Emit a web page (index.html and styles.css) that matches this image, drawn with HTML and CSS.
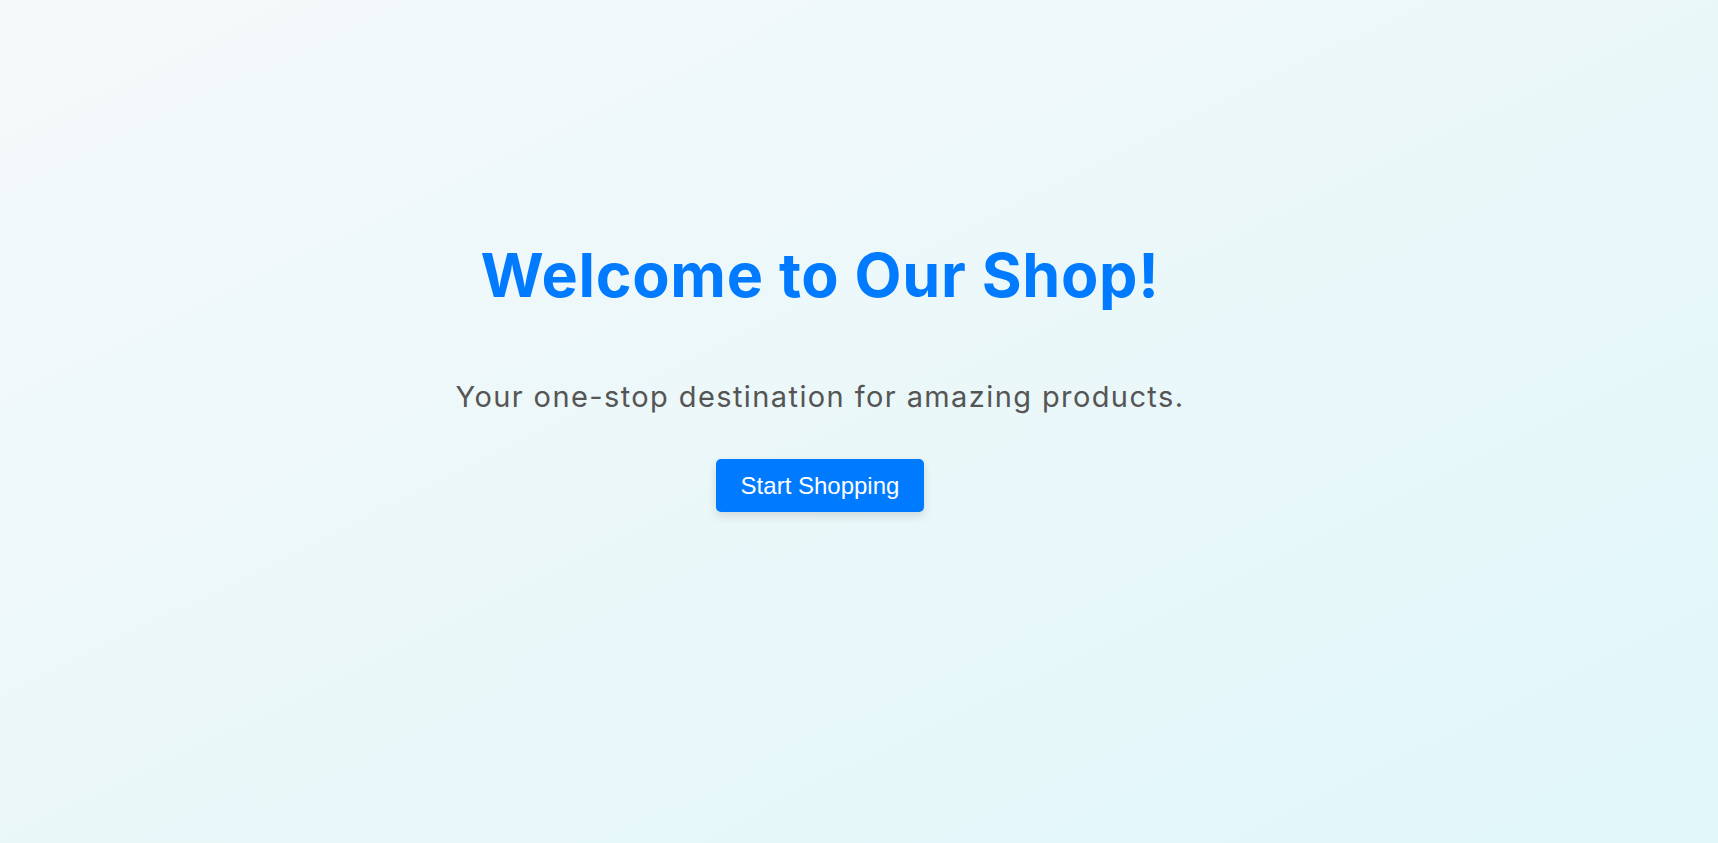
FILE: index.html
```html
<!DOCTYPE html>
<html lang="en">
<head>
<meta charset="utf-8">
<title>Welcome to Our Shop</title>
<link rel="stylesheet" href="styles.css">
</head>
<body>
<main class="hero">
  <h1 class="hero-title">Welcome to Our Shop!</h1>
  <p class="hero-subtitle">Your one-stop destination for amazing products.</p>
  <button class="hero-button" type="button">Start Shopping</button>
</main>
</body>
</html>
```
FILE: styles.css
```css
* { box-sizing: border-box; }
html, body { margin: 0; padding: 0; height: 100%; }
body {
  background: linear-gradient(to bottom right, #f5f9fa 0%, #e0f6f9 100%);
  font-family: Inter, "Open Sans", sans-serif;
}
.hero {
  min-height: 100vh;
  display: flex;
  flex-direction: column;
  align-items: center;
  justify-content: center;
  padding: 0 78px 92px 0;
  text-align: center;
}
.hero-title {
  margin: 0 0 66px;
  font-size: 61px;
  line-height: 72px;
  font-weight: 700;
  letter-spacing: 0.7px;
  color: #007bff;
}
.hero-subtitle {
  margin: 0 0 42px;
  font-size: 29px;
  line-height: 40px;
  font-weight: 400;
  letter-spacing: 1.4px;
  color: #555555;
}
.hero-button {
  font-family: "Liberation Sans", Arial, sans-serif;
  font-size: 24px;
  line-height: 28px;
  padding: 12.5px 25px;
  color: #ffffff;
  background: #007bff;
  border: none;
  border-radius: 5px;
  box-shadow: 0 4px 10px rgba(0, 0, 0, 0.12);
  cursor: pointer;
}
```
